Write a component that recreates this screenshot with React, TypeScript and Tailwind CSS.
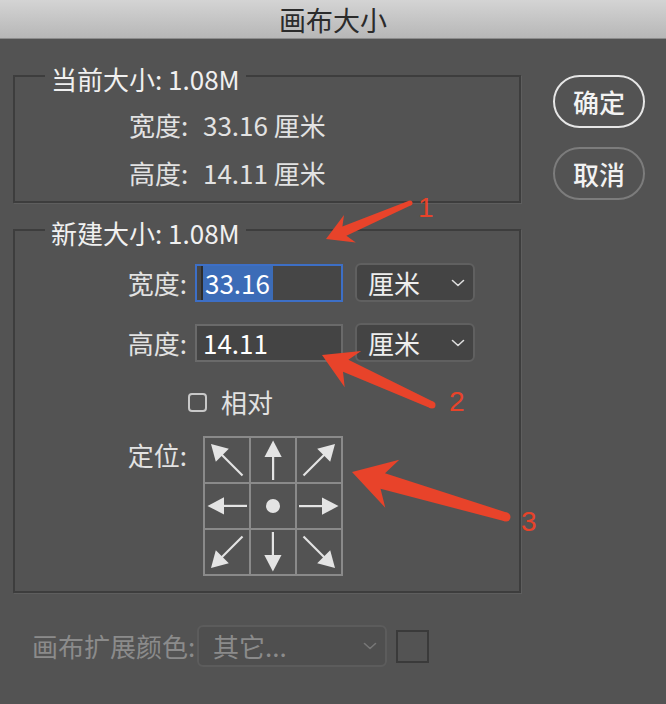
import React from "react";

type P = [number, number];

function arrowPoly(tail: P, tip: P, headLen: number, headW: number, tailW: number, neckW: number, notch: number) {
  const dx = tip[0] - tail[0];
  const dy = tip[1] - tail[1];
  const L = Math.hypot(dx, dy);
  const ux = dx / L;
  const uy = dy / L;
  const nx = -uy;
  const ny = ux;
  const hb: P = [tip[0] - ux * headLen, tip[1] - uy * headLen];
  const nk: P = [tip[0] - ux * (headLen - notch), tip[1] - uy * (headLen - notch)];
  const pts: P[] = [
    [tail[0] + (nx * tailW) / 2, tail[1] + (ny * tailW) / 2],
    [nk[0] + (nx * neckW) / 2, nk[1] + (ny * neckW) / 2],
    [hb[0] + (nx * headW) / 2, hb[1] + (ny * headW) / 2],
    tip,
    [hb[0] - (nx * headW) / 2, hb[1] - (ny * headW) / 2],
    [nk[0] - (nx * neckW) / 2, nk[1] - (ny * neckW) / 2],
    [tail[0] - (nx * tailW) / 2, tail[1] - (ny * tailW) / 2],
  ];
  return pts.map((p) => `${p[0].toFixed(1)},${p[1].toFixed(1)}`).join(" ");
}

const RED = "#e8432a";

function Annotations() {
  const arrows = [
    { tail: [410, 203] as P, tip: [326, 239] as P, hl: 26, hw: 30, tw: 5, nw: 10, no: 6 },
    { tail: [432, 405] as P, tip: [322, 355] as P, hl: 34, hw: 40, tw: 7, nw: 13, no: 8 },
    { tail: [506, 517] as P, tip: [352, 472] as P, hl: 42, hw: 50, tw: 9, nw: 16, no: 10 },
  ];
  return (
    <svg className="absolute inset-0 pointer-events-none" width={666} height={704} viewBox="0 0 666 704">
      {arrows.map((a, i) => (
        <g key={i} fill={RED}>
          <polygon points={arrowPoly(a.tail, a.tip, a.hl, a.hw, a.tw, a.nw, a.no)} />
          <circle cx={a.tail[0]} cy={a.tail[1]} r={a.tw / 2} />
        </g>
      ))}
      <g fill={RED} fontFamily="'Liberation Sans', sans-serif" fontSize={28}>
        <text x={418} y={217}>1</text>
        <text x={449} y={411}>2</text>
        <text x={521} y={531}>3</text>
      </g>
    </svg>
  );
}

function Chevron({ color }: { color: string }) {
  return (
    <svg width="14" height="8" viewBox="0 0 14 8">
      <path d="M1.5 1.5 L7 6.5 L12.5 1.5" fill="none" stroke={color} strokeWidth="1.6" strokeLinecap="round" strokeLinejoin="round" />
    </svg>
  );
}

type Dir = { kind: "s" | "d" | "dot"; rot: number };

function Cell({ d }: { d: Dir }) {
  return (
    <div className="w-[44px] h-[44px] bg-[#535353]">
      <svg width="44" height="44" viewBox="0 0 44 44">
        {d.kind === "dot" && <circle cx="22" cy="22" r="7" fill="#e4e4e4" />}
        {d.kind === "s" && (
          <g transform={`rotate(${d.rot} 22 22)`} fill="#e4e4e4">
            <rect x="21" y="15" width="2.2" height="27" />
            <polygon points="22.1,2.5 13.5,19 30.7,19" />
          </g>
        )}
        {d.kind === "d" && (
          <g transform={`rotate(${d.rot} 22 22)`} fill="#e4e4e4">
            <line x1="15" y1="15" x2="37.5" y2="37.5" stroke="#e4e4e4" strokeWidth="2.2" />
            <polygon points="6,6 10.8,23.8 23.8,10.8" />
          </g>
        )}
      </svg>
    </div>
  );
}

const dirs: Dir[] = [
  { kind: "d", rot: 0 },
  { kind: "s", rot: 0 },
  { kind: "d", rot: 90 },
  { kind: "s", rot: 270 },
  { kind: "dot", rot: 0 },
  { kind: "s", rot: 90 },
  { kind: "d", rot: 270 },
  { kind: "s", rot: 180 },
  { kind: "d", rot: 180 },
];

export default function App() {
  return (
    <div className="relative w-[666px] h-[704px] overflow-hidden bg-[#535353] flex flex-col font-['Noto_Sans_CJK_SC','Liberation_Sans',sans-serif]">
      <div className="h-[39px] shrink-0 bg-linear-to-b from-[#d4d4d4] to-[#b7b7b7] border-b border-[#8c8c8c] flex items-center justify-center text-[27px] leading-none text-[#2b2b2b]">
        画布大小
      </div>
      <div className="flex pl-[13px]">
        <div className="w-[508px] flex flex-col">
          {/* current size */}
          <div className="relative mt-[36px] h-[128px] border-2 border-[#3d3d3d] shadow-[1px_1px_0_#5e5e5e] pt-[34px] pl-[114px] flex flex-col gap-[20px] text-[26px] leading-[28px] text-[#e2e2e2]">
            <div className="absolute left-[30px] top-[-13px] px-[6px] bg-[#535353] text-[26px] leading-[30px] text-[#f0f0f0]">
              当前大小: 1.08M
            </div>
            <div className="flex">
              <span className="w-[74px]">宽度:</span>
              <span>33.16 厘米</span>
            </div>
            <div className="flex">
              <span className="w-[74px]">高度:</span>
              <span>14.11 厘米</span>
            </div>
          </div>

          {/* new size */}
          <div className="relative mt-[26px] h-[364px] border-2 border-[#3d3d3d] shadow-[1px_1px_0_#5e5e5e] pt-[32px] pl-[92px] flex flex-col text-[26px] leading-[28px] text-[#e2e2e2]">
            <div className="absolute left-[30px] top-[-13px] px-[6px] bg-[#535353] text-[26px] leading-[30px] text-[#f0f0f0]">
              新建大小: 1.08M
            </div>
            <div className="flex items-center h-[39px]">
              <span className="w-[80px] text-right">宽度:</span>
              <div className="ml-[8px] w-[148px] h-[38px] border-2 border-[#3d6fc6] bg-[#464646] flex items-center pl-[4px]">
                <span className="h-[34px] flex items-center bg-[#3c6cb7] text-white pl-[2px] pr-[3px] border-l-2 border-[#2c2c2c]">33.16</span>
              </div>
              <div className="ml-[12px] w-[120px] h-[39px] rounded-[6px] border-2 border-[#606060] bg-[#444444] flex items-center justify-between pl-[11px] pr-[8px] text-[#eeeeee]">
                <span>厘米</span>
                <Chevron color="#dddddd" />
              </div>
            </div>
            <div className="flex items-center h-[39px] mt-[21px]">
              <span className="w-[80px] text-right">高度:</span>
              <div className="ml-[8px] w-[148px] h-[38px] border-2 border-[#6a6a6a] bg-[#444444] flex items-center pl-[6px] text-white">
                14.11
              </div>
              <div className="ml-[12px] w-[120px] h-[39px] rounded-[6px] border-2 border-[#606060] bg-[#444444] flex items-center justify-between pl-[11px] pr-[8px] text-[#eeeeee]">
                <span>厘米</span>
                <Chevron color="#dddddd" />
              </div>
            </div>
            <div className="flex items-center h-[28px] mt-[26px] pl-[81px]">
              <div className="shrink-0 w-[19px] h-[19px] rounded-[4px] border-2 border-[#c8c8c8]" />
              <span className="ml-[14px]">相对</span>
            </div>
            <div className="flex mt-[20px]">
              <span className="w-[80px] text-right pt-[5px]">定位:</span>
              <div className="ml-[16px] grid grid-cols-3 gap-[2px] p-[2px] bg-[#8a8a8a]">
                {dirs.map((d, i) => (
                  <Cell key={i} d={d} />
                ))}
              </div>
            </div>
          </div>

          {/* extension colour */}
          <div className="mt-[32px] flex items-center pl-[19px] text-[26px] leading-[28px] text-[#8b8b8b]">
            <span className="w-[165px]">画布扩展颜色:</span>
            <div className="w-[190px] h-[42px] rounded-[6px] border-2 border-[#5c5c5c] bg-[#4f4f4f] flex items-center justify-between pl-[14px] pr-[8px]">
              <span>其它...</span>
              <Chevron color="#777777" />
            </div>
            <div className="ml-[9px] w-[33px] h-[33px] border-2 border-[#3a3a3a]" />
          </div>
        </div>

        <div className="ml-[32px] pt-[36px] flex flex-col gap-[19px]">
          <div className="w-[92px] h-[53px] rounded-full border-2 border-[#e6e6e6] flex items-center justify-center text-[26px] leading-none text-[#f2f2f2] font-medium">
            确定
          </div>
          <div className="w-[92px] h-[53px] rounded-full border-2 border-[#7c7c7c] flex items-center justify-center text-[26px] leading-none text-[#f2f2f2] font-medium">
            取消
          </div>
        </div>
      </div>
      <Annotations />
    </div>
  );
}
